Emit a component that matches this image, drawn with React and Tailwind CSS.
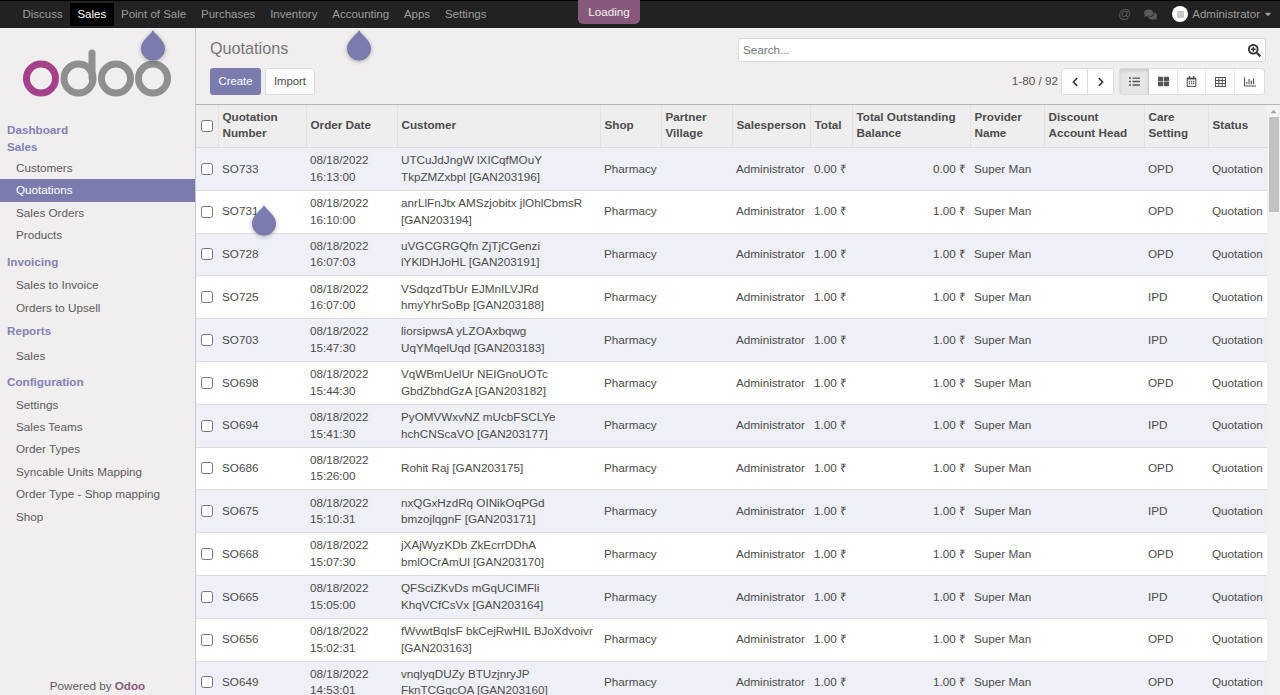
import { FaComments, FaSearchPlus, FaChevronLeft, FaChevronRight, FaListUl, FaThLarge, FaRegCalendarAlt, FaRegChartBar, FaCaretDown, FaCaretUp } from 'react-icons/fa';

const topMenu = ['Discuss', 'Sales', 'Point of Sale', 'Purchases', 'Inventory', 'Accounting', 'Apps', 'Settings'];

const sideMenu = [
  { head: 'Dashboard', mt: 'mt-0' },
  { head: 'Sales', mt: 'mt-0', listMt: 'mt-[1px]', items: ['Customers', 'Quotations', 'Sales Orders', 'Products'] },
  { head: 'Invoicing', mt: 'mt-[7px]', listMt: 'mt-[4px]', items: ['Sales to Invoice', 'Orders to Upsell'] },
  { head: 'Reports', mt: 'mt-[4px]', listMt: 'mt-[5px]', items: ['Sales'] },
  { head: 'Configuration', mt: 'mt-[6px]', listMt: 'mt-[3px]', items: ['Settings', 'Sales Teams', 'Order Types', 'Syncable Units Mapping', 'Order Type - Shop mapping', 'Shop'] },
];

const columns = [
  { label: ['Quotation', 'Number'], w: 'w-[88px]' },
  { label: ['Order Date'], w: 'w-[91px]' },
  { label: ['Customer'], w: 'w-[203px]' },
  { label: ['Shop'], w: 'w-[61px]' },
  { label: ['Partner', 'Village'], w: 'w-[71px]' },
  { label: ['Salesperson'], w: 'w-[78px]' },
  { label: ['Total'], w: 'w-[42px]' },
  { label: ['Total Outstanding', 'Balance'], w: 'w-[118px]' },
  { label: ['Provider', 'Name'], w: 'w-[74px]' },
  { label: ['Discount', 'Account Head'], w: 'w-[100px]' },
  { label: ['Care', 'Setting'], w: 'w-[64px]' },
  { label: ['Status'], w: 'w-[59px]' },
];

const rows = [
  ['SO733', '16:13:00', 'UTCuJdJngW lXICqfMOuY TkpZMZxbpl [GAN203196]', 'OPD', '0.00'],
  ['SO731', '16:10:00', 'anrLlFnJtx AMSzjobitx jlOhlCbmsR [GAN203194]', 'OPD', '1.00'],
  ['SO728', '16:07:03', 'uVGCGRGQfn ZjTjCGenzi lYKlDHJoHL [GAN203191]', 'OPD', '1.00'],
  ['SO725', '16:07:00', 'VSdqzdTbUr EJMnILVJRd hmyYhrSoBp [GAN203188]', 'IPD', '1.00'],
  ['SO703', '15:47:30', 'liorsipwsA yLZOAxbqwg UqYMqelUqd [GAN203183]', 'IPD', '1.00'],
  ['SO698', '15:44:30', 'VqWBmUelUr NEIGnoUOTc GbdZbhdGzA [GAN203182]', 'OPD', '1.00'],
  ['SO694', '15:41:30', 'PyOMVWxvNZ mUcbFSCLYe hchCNScaVO [GAN203177]', 'IPD', '1.00'],
  ['SO686', '15:26:00', 'Rohit Raj [GAN203175]', 'OPD', '1.00'],
  ['SO675', '15:10:31', 'nxQGxHzdRq OINikOqPGd bmzojlqgnF [GAN203171]', 'IPD', '1.00'],
  ['SO668', '15:07:30', 'jXAjWyzKDb ZkEcrrDDhA bmlOCrAmUl [GAN203170]', 'OPD', '1.00'],
  ['SO665', '15:05:00', 'QFSciZKvDs mGqUCIMFli KhqVCfCsVx [GAN203164]', 'IPD', '1.00'],
  ['SO656', '15:02:31', 'fWvwtBqlsF bkCejRwHIL BJoXdvoivr [GAN203163]', 'OPD', '1.00'],
  ['SO649', '14:53:01', 'vnqlyqDUZy BTUzjnryJP FknTCGqcOA [GAN203160]', 'OPD', '1.00'],
];

function Drop({ className }) {
  return (
    <svg viewBox="0 0 26 31" className={`absolute w-[26px] h-[31px] drop-shadow-[0_1px_2px_rgba(0,0,0,0.3)] ${className}`}>
      <path d="M13 0 C15 5 25 10 25 18.500 A12 12 0 0 1 1 18.500 C1 10 11 5 13 0 Z" fill="#7c7bad" />
    </svg>
  );
}

function Logo() {
  return (
    <svg viewBox="0 0 150 48" className="w-[150px] h-[48px]" fill="none" strokeWidth="7">
      <circle cx="18" cy="29.500" r="14.500" stroke="#a5408b" />
      <circle cx="55.500" cy="29.500" r="14.500" stroke="#8f8f8f" />
      <path d="M69 29 V4" stroke="#8f8f8f" strokeLinecap="round" />
      <circle cx="93" cy="29.500" r="14.500" stroke="#8f8f8f" />
      <circle cx="130" cy="29.500" r="14.500" stroke="#8f8f8f" />
    </svg>
  );
}

// thin grid, the package's table icon has a heavy header row
function GridIcon() {
  return (
    <svg viewBox="0 0 11 10" className="w-[11px] h-[10px]" fill="none" stroke="currentColor" strokeWidth="1">
      <rect x="0.500" y="0.500" width="10" height="9" />
      <path d="M0.500 3.500 H10.500 M0.500 6.500 H10.500 M3.800 0.500 V9.500 M7.200 0.500 V9.500" />
    </svg>
  );
}

export default function App() {
  return (
    <div className="relative h-screen overflow-hidden flex flex-col bg-[#f0eeee] text-[11.7px] leading-[16.7px] text-[#4c4c4c] font-['Liberation_Sans',Arial,sans-serif]">
      {/* top bar */}
      <header className="h-[28px] shrink-0 bg-[#222222] border-t border-black flex items-center justify-between pl-[15px] pr-[7px] text-[11.500px]">
        <nav className="flex h-full items-center">
          {topMenu.map((m) => (
            <span key={m} className={`h-[23px] px-[7.400px] flex items-center ${m === 'Sales' ? 'bg-black text-white' : 'text-[#9d9d9d]'}`}>{m}</span>
          ))}
        </nav>
        <div className="flex items-center text-[#9d9d9d]">
          <span className="text-[#5a5a5a] text-[13px]">@</span>
          <FaComments className="ml-[13px] text-[13px] text-[#5a5a5a]" />
          <span className="ml-[15px] w-[16px] h-[16px] rounded-full bg-white flex items-center justify-center">
            <span className="w-[7px] h-[7px] bg-[#c8c8c8] rounded-[1px]" />
          </span>
          <span className="ml-[4px]">Administrator</span>
          <FaCaretDown className="ml-[3px] text-[10px]" />
        </div>
      </header>

      <div className="flex flex-1 min-h-0">
        {/* sidebar */}
        <aside className="w-[196px] shrink-0 border-r border-[#c8c8c8] flex flex-col">
          <div className="h-[94px] shrink-0 pl-[23px] pt-[21px]">
            <Logo />
          </div>
          <div className="flex-1">
            {sideMenu.map((s) => (
              <div key={s.head} className={s.mt}>
                <div className="pl-[7px] h-[17px] flex items-center font-bold text-[#8482b4]">{s.head}</div>
                {s.items && (
                  <ul className={s.listMt}>
                    {s.items.map((it) => (
                      <li key={it} className={`h-[22.400px] pl-[16px] flex items-center ${it === 'Quotations' ? 'bg-[#7c7bad] text-white' : 'text-[#5c5c5c]'}`}>{it}</li>
                    ))}
                  </ul>
                )}
              </div>
            ))}
          </div>
          <div className="text-center text-[#5c5c5c]">Powered by <span className="font-bold text-[#875a7b]">Odoo</span></div>
        </aside>

        {/* main */}
        <main className="flex-1 min-w-0 flex flex-col">
          <div className="h-[77px] shrink-0 border-b border-[#b4b4b4] pl-[14px] pr-[14px] flex flex-col">
            <div className="flex justify-between mt-[10px] h-[24px]">
              <h1 className="text-[16.200px] leading-[20px] text-[#777777]">Quotations</h1>
              <div className="w-[528px] h-[24px] bg-white border border-[#d9d9d9] rounded-[3px] flex items-center justify-between pl-[4px] pr-[4px]">
                <span className="text-[#777777]">Search...</span>
                <FaSearchPlus className="text-[13px] text-[#333333]" />
              </div>
            </div>
            <div className="flex justify-between items-center mt-[6px] h-[27px]">
              <div className="flex gap-[4px] text-[11.300px]">
                <button className="w-[51px] h-[27px] bg-[#7c7bad] rounded-[3px] text-white">Create</button>
                <button className="w-[50px] h-[27px] bg-white border border-[#dcdcdc] rounded-[3px] text-[#4c4c4c]">Import</button>
              </div>
              <div className="flex items-center mr-[1px]">
                <span className="mr-[3px] text-[#555555]">1-80 / 92</span>
                <div className="flex h-[27px] bg-white border border-[#dcdcdc] rounded-[3px] mr-[5px]">
                  <span className="w-[26px] flex items-center justify-center border-r border-[#dcdcdc] text-[#333333]"><FaChevronLeft className="text-[10px]" /></span>
                  <span className="w-[25px] flex items-center justify-center text-[#333333]"><FaChevronRight className="text-[10px]" /></span>
                </div>
                <div className="flex h-[27px] bg-white border border-[#dcdcdc] rounded-[3px] text-[#555555]">
                  <span className="w-[29px] flex items-center justify-center bg-[#e6e6e6] border-r border-[#c8c8c8] shadow-[inset_0_2px_3px_rgba(0,0,0,0.12)]"><FaListUl className="text-[11px]" /></span>
                  <span className="w-[29px] flex items-center justify-center border-r border-[#e4e4e4]"><FaThLarge className="text-[11px]" /></span>
                  <span className="w-[28px] flex items-center justify-center border-r border-[#e4e4e4]"><FaRegCalendarAlt className="text-[11px]" /></span>
                  <span className="w-[29px] flex items-center justify-center border-r border-[#e4e4e4]"><GridIcon /></span>
                  <span className="w-[29px] flex items-center justify-center"><FaRegChartBar className="text-[12px]" /></span>
                </div>
              </div>
            </div>
          </div>

          <div className="flex flex-1 min-h-0">
            <div className="flex-1 min-w-0 overflow-hidden">
              <table className="w-[1071px] table-fixed border-collapse">
                <colgroup>
                  <col className="w-[22px]" />
                  {columns.map((c) => (
                    <col key={c.label[0]} className={c.w} />
                  ))}
                </colgroup>
                <thead>
                  <tr className="h-[42.500px] bg-[#eeeeee] border-b border-[#dddddd]">
                    <th className="border-r border-[#e2e2e2] pl-[5px] text-left align-middle">
                      <input type="checkbox" className="block w-[12px] h-[12px] m-0" />
                    </th>
                    {columns.map((c) => (
                      <th key={c.label[0]} className="px-[4px] pb-[1.500px] text-left align-middle font-bold text-[#4c4c4c] border-r border-[#e2e2e2] last:border-r-0 whitespace-nowrap">
                        {c.label.map((l) => <div key={l}>{l}</div>)}
                      </th>
                    ))}
                  </tr>
                </thead>
                <tbody>
                  {rows.map((r, i) => (
                    <tr key={r[0]} className={`h-[42.800px] border-b border-[#dddddd] ${i % 2 === 0 ? 'bg-[#eeeff7]' : 'bg-white'}`}>
                      <td className="pl-[5px]"><input type="checkbox" className="block w-[12px] h-[12px] m-0" /></td>
                      <td className="px-[4px]">{r[0]}</td>
                      <td className="px-[4px]"><div>08/18/2022</div><div>{r[1]}</div></td>
                      <td className="px-[4px]">{r[2]}</td>
                      <td className="px-[4px]">Pharmacy</td>
                      <td className="px-[4px]"></td>
                      <td className="px-[4px]">Administrator</td>
                      <td className="px-[4px] whitespace-nowrap">{r[4]} ₹</td>
                      <td className="px-[4px] text-right whitespace-nowrap">{r[4]} ₹</td>
                      <td className="px-[4px]">Super Man</td>
                      <td className="px-[4px]"></td>
                      <td className="px-[4px]">{r[3]}</td>
                      <td className="px-[4px]">Quotation</td>
                    </tr>
                  ))}
                </tbody>
              </table>
            </div>
            {/* scrollbar */}
            <div className="w-[13px] shrink-0 bg-[#f1f1f1] flex flex-col items-center">
              <FaCaretUp className="text-[9px] mt-[2px] text-[#a3a3a3]" />
              <div className="w-[10px] h-[95px] mt-[1px] bg-[#c1c1c1]" />
            </div>
          </div>
        </main>
      </div>

      {/* loading tab and drops lie over the page */}
      <div className="absolute top-0 left-[578px] w-[62px] h-[24px] bg-[#875a7b] rounded-b-[5px] text-white/90 flex items-center justify-center">Loading</div>
      <Drop className="left-[140px] top-[30px]" />
      <Drop className="left-[346px] top-[30px]" />
      <Drop className="left-[251px] top-[205px]" />
    </div>
  );
}
